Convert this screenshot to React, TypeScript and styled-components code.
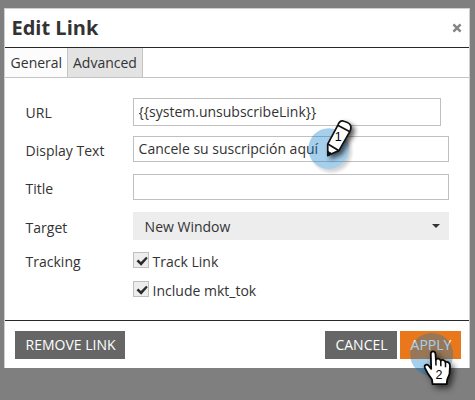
import React from "react";
import styled, { createGlobalStyle } from "styled-components";

const GlobalStyle = createGlobalStyle`
  * { box-sizing: border-box; }
  body {
    margin: 0;
    background: #7f7f80;
    color: #333;
    font: 14px/20px "Open Sans", "Noto Sans", sans-serif;
    overflow: hidden;
  }
`;

const Page = styled.main`
  position: relative;
  height: 400px;
  padding: 8px 4px 32px;
`;

const Dialog = styled.section`
  width: 466px;
  height: 360px;
  display: flex;
  flex-direction: column;
  background: #fff;
  border: 1px solid #cfcfcf;
  border-bottom: 0;
`;

const Header = styled.header`
  height: 39px;
  flex: none;
  display: flex;
  align-items: center;
  justify-content: space-between;
  padding: 0 7px 0 6.5px;
  border-bottom: 1px solid #282828;
`;

const Title = styled.h1`
  margin: 0;
  font-size: 20px;
  line-height: 28px;
  font-weight: 700;
`;

const CloseButton = styled.button`
  display: flex;
  padding: 0;
  border: 0;
  background: none;
`;

const Tabs = styled.nav`
  height: 30px;
  flex: none;
  display: flex;
  border-bottom: 1px solid #c4c4c4;
`;

const Tab = styled.button<{ $active?: boolean; $width: number }>`
  width: ${(p) => p.$width}px;
  padding: 0 0 0 ${(p) => (p.$active ? 5 : 5.6)}px;
  border: 0;
  border-right: 1px solid #c4c4c4;
  background: ${(p) => (p.$active ? "#e3e3e3" : "#fcfcfc")};
  color: inherit;
  font: inherit;
  text-align: left;
  white-space: nowrap;
`;

const Form = styled.div`
  height: 242px;
  padding: 20px 0 0 20px;
`;

const Row = styled.div<{ $height: number }>`
  height: ${(p) => p.$height}px;
  display: grid;
  grid-template-columns: 108px 316px;
  align-items: start;
`;

const Label = styled.span<{ $top: number }>`
  padding: ${(p) => p.$top}px 0 0 0.6px;
`;

const Field = styled.input<{ $width?: number; $height?: number }>`
  width: ${(p) => p.$width ?? 316}px;
  height: ${(p) => p.$height ?? 26}px;
  padding: 0 4px 2px 4.6px;
  border: 1px solid #c0c0c0;
  border-radius: 0;
  background: #fff;
  color: inherit;
  font: inherit;
  outline: 0;
`;

const Select = styled.div`
  height: 28px;
  display: flex;
  align-items: center;
  justify-content: space-between;
  padding: 1px 9px 0 11.6px;
  background: #ededed;
`;

const Caret = styled.svg`
  margin-bottom: 1px;
`;

const CheckOption = styled.div`
  height: 16px;
  display: flex;
  align-items: flex-start;
  gap: 3.6px;
`;

const CheckBox = styled.span`
  width: 16px;
  height: 16px;
  display: flex;
  border: 1px solid #bfbfbf;
  background: #ededed;
`;

const Footer = styled.footer`
  flex: 1;
  display: flex;
  padding: 10px 8px 0 10px;
  border-top: 1px solid #282828;
`;

const Button = styled.button<{ $width: number; $primary?: boolean; $end?: boolean }>`
  width: ${(p) => p.$width}px;
  height: 28px;
  padding: 0 0 0 1px;
  border: 0;
  margin-left: ${(p) => (p.$end ? "auto" : p.$primary ? "3px" : "0")};
  background: ${(p) => (p.$primary ? "#e9781c" : "#666")};
  color: #fff;
  font: inherit;
  white-space: nowrap;
`;

const Marker = styled.svg<{ $x: number; $y: number }>`
  position: absolute;
  left: ${(p) => p.$x}px;
  top: ${(p) => p.$y}px;
  overflow: visible;
  pointer-events: none;
`;

const Shadowed = styled.g<{ $spread?: number }>`
  filter: drop-shadow(3px 3px ${(p) => p.$spread ?? 2}px rgba(0, 0, 0, 0.65));
`;

const StepNumber = styled.text`
  font-family: "Liberation Sans", Arial, sans-serif;
  font-size: 12.5px;
  text-anchor: middle;
  fill: #000;
`;

const Tick = () => (
  <svg width="14" height="14" viewBox="0 0 14 14">
    <path d="M2.5 8.3 L4.4 6.6 L6.9 8.9 L12.2 3.8 L13.7 5.3 L7.2 12.8Z" fill="#2b2b2b" />
  </svg>
);

const PencilMarker = () => (
  <Marker $x={300} $y={110} width="70" height="60" viewBox="0 0 70 60">
    <defs>
      <radialGradient id="halo-shade">
        <stop offset="0.78" stopColor="#000" stopOpacity="0.17" />
        <stop offset="1" stopColor="#000" stopOpacity="0" />
      </radialGradient>
      <mask id="outside-halo" maskUnits="userSpaceOnUse" x="-10" y="-10" width="100" height="100">
        <rect x="-10" y="-10" width="100" height="100" fill="#fff" />
        <circle cx="28.7" cy="38.7" r="20.4" fill="#000" />
      </mask>
    </defs>
    <circle cx="31.5" cy="42" r="22.5" fill="url(#halo-shade)" mask="url(#outside-halo)" />
    <circle cx="28.7" cy="38.7" r="20.4" fill="rgba(0,118,200,.35)" />
    <Shadowed $spread={2.5}>
      <path
        d="M27.3 45.2 L27.2 33.8 L37.4 14.8 C38.6 11.2 40.6 10 43.6 10.9 C46.6 11.7 50.6 13.7 50.4 17 C50.4 18.6 50 20 49.3 21.3 L38.4 40.3Z"
        transform="translate(0.5 0.3)"
        fill="#fff"
        stroke="#111"
        strokeWidth="1.7"
        strokeLinejoin="round"
      />
    </Shadowed>
    <path d="M37.7 15.3 L49.5 21.5 M27.9 34 L38.6 40.5" stroke="#111" strokeWidth="1.7" />
    <path d="M27.7 41.3 L31.7 43.5 L27.8 46Z" fill="#111" stroke="#111" />
    <StepNumber x="38.3" y="31.2">1</StepNumber>
  </Marker>
);

const HandMarker = () => (
  <Marker $x={400} $y={325} width="75" height="75" viewBox="0 0 75 75">
    <circle cx="31.7" cy="29.4" r="21.5" fill="rgba(0,118,200,.35)" />
    <Shadowed $spread={3}>
      <path
        d="M32.5 59.2 L32 54.5 L28 48.8 L24.9 42.8 C23.8 39.8 27 38.7 28.7 40.8 L31.2 43.8 L30.8 29.2 C30.6 25.5 35.2 25.3 35.5 29 L35.9 34.7 C37.2 32.8 40.2 33.7 40.7 35.8 C42.1 34.2 44.9 35 45.5 37.3 C47.4 36.3 50.1 37.6 50 41 L49.5 49 L47.2 54.6 L46.7 59.2Z"
        fill="#fff"
        stroke="#080808"
        strokeWidth="1.8"
        strokeLinejoin="round"
      />
    </Shadowed>
    <path
      d="M35.8 34 L36 40.5 M40.7 35.8 L40.9 41.3 M45.5 37.3 L45.5 42.2"
      fill="none"
      stroke="#080808"
      strokeWidth="1.5"
    />
    <StepNumber x="39.1" y="54.4">2</StepNumber>
  </Marker>
);

export default function App() {
  return (
    <>
      <GlobalStyle />
      <Page>
        <Dialog>
          <Header>
            <Title>Edit Link</Title>
            <CloseButton aria-label="Close">
              <svg width="10" height="10" viewBox="0 0 10 10">
                <path d="M1.4 1.4 L8.6 8.6 M8.6 1.4 L1.4 8.6" stroke="#858585" strokeWidth="2.5" />
              </svg>
            </CloseButton>
          </Header>
          <Tabs>
            <Tab $width={63}>General</Tab>
            <Tab $width={75} $active>Advanced</Tab>
          </Tabs>
          <Form>
            <Row $height={38}>
              <Label $top={5}>URL</Label>
              <Field $width={308} $height={28} defaultValue="{{system.unsubscribeLink}}" />
            </Row>
            <Row $height={38}>
              <Label $top={5}>Display Text</Label>
              <Field defaultValue="Cancele su suscripción aquí" />
            </Row>
            <Row $height={38}>
              <Label $top={5}>Title</Label>
              <Field />
            </Row>
            <Row $height={40}>
              <Label $top={6}>Target</Label>
              <Select>
                New Window
                <Caret width="8" height="4" viewBox="0 0 8 4">
                  <path d="M0 0H8L4 4Z" fill="#333" />
                </Caret>
              </Select>
            </Row>
            <Row $height={29}>
              <Label $top={0}>Tracking</Label>
              <CheckOption><CheckBox><Tick /></CheckBox>Track Link</CheckOption>
            </Row>
            <Row $height={29}>
              <span />
              <CheckOption><CheckBox><Tick /></CheckBox>Include mkt_tok</CheckOption>
            </Row>
          </Form>
          <Footer>
            <Button $width={110}>REMOVE LINK</Button>
            <Button $width={72} $end>CANCEL</Button>
            <Button $width={61} $primary>APPLY</Button>
          </Footer>
        </Dialog>
        <PencilMarker />
        <HandMarker />
      </Page>
    </>
  );
}
